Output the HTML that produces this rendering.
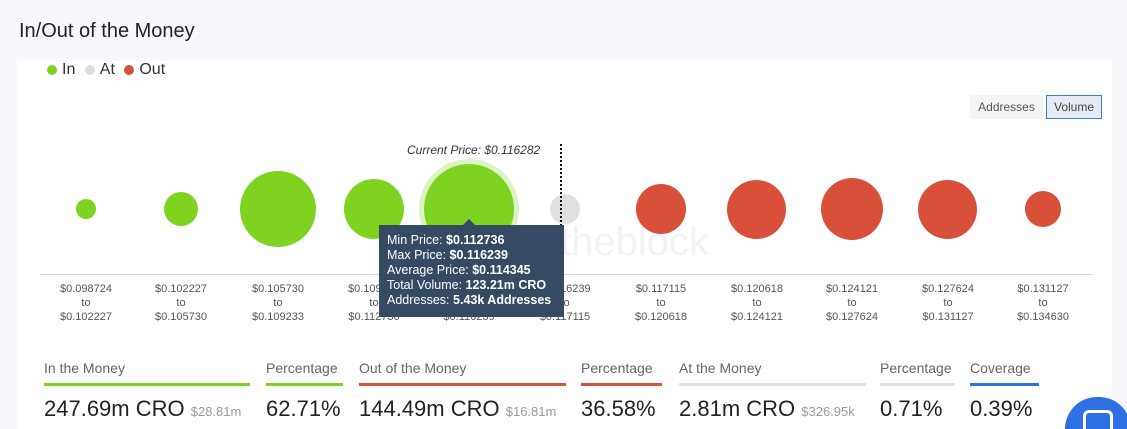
<!DOCTYPE html>
<html><head><meta charset="utf-8"><style>
*{margin:0;padding:0;box-sizing:border-box}
html,body{width:1127px;height:429px;overflow:hidden}
body{background:#f7f8fb;font-family:"Liberation Sans",sans-serif;color:#222}
#w{position:relative;width:1127px;height:429px;overflow:hidden}
.abs{position:absolute}
.card{position:absolute;left:17px;top:61px;width:1095px;height:368px;background:#fff}
.b{position:absolute;border-radius:50%}
.g{background:#7ed321}.r{background:#d9503a}
.lbl{position:absolute;top:282px;width:90px;text-align:center;font-size:11px;line-height:14px;color:#555}
.st{position:absolute;top:360px;font-size:14px;color:#666}
.st .u{height:3px;margin-top:7px}
.st .v{font-size:22px;color:#222;margin-top:10px;white-space:nowrap;line-height:26px}
.st .v small{font-size:13px;color:#999}
</style></head><body><div id="w">
<div class="abs" style="left:19px;top:20px;font-size:20px;color:#222">In/Out of the Money</div>
<div class="card"></div>
<div class="abs" style="left:47px;top:61px;font-size:16px;color:#333;display:flex;align-items:center;gap:5px">
<span style="width:10px;height:10px;border-radius:50%;background:#7ed321;display:inline-block"></span>In&nbsp;
<span style="width:10px;height:10px;border-radius:50%;background:#ddd;display:inline-block"></span>At&nbsp;
<span style="width:10px;height:10px;border-radius:50%;background:#d9503a;display:inline-block"></span>Out</div>
<div class="abs" style="left:970px;top:95px;width:73px;height:24px;background:#f3f4f6;font-size:12px;color:#555;text-align:center;line-height:24px">Addresses</div>
<div class="abs" style="left:1046px;top:95px;width:56px;height:24px;background:#e6ebf5;border:1px solid #3a7be0;font-size:12px;color:#444;text-align:center;line-height:22px">Volume</div>
<div class="abs" style="left:560px;top:220px;font-size:40px;color:#f1f2f5">theblock</div>
<div class="b g" style="left:76px;top:199px;width:20px;height:20px"></div>
<div class="b g" style="left:164px;top:192px;width:34px;height:34px"></div>
<div class="b g" style="left:240px;top:171px;width:76px;height:76px"></div>
<div class="b g" style="left:344px;top:179px;width:60px;height:60px"></div>
<div class="b" style="left:419px;top:159px;width:100px;height:100px;background:#dcf3c4"></div>
<div class="b g" style="left:424px;top:164px;width:90px;height:90px"></div>
<div class="b" style="left:550px;top:194px;width:30px;height:30px;background:#e0e0e0"></div>
<div class="b r" style="left:636px;top:184px;width:50px;height:50px"></div>
<div class="b r" style="left:727px;top:180px;width:59px;height:59px"></div>
<div class="b r" style="left:821px;top:178px;width:62px;height:62px"></div>
<div class="b r" style="left:918px;top:180px;width:59px;height:59px"></div>
<div class="b r" style="left:1025px;top:191px;width:36px;height:36px"></div>
<div class="abs" style="left:560px;top:144px;height:82px;border-left:2px dotted #111"></div>
<div class="abs" style="left:407px;top:143px;font-size:12px;font-style:italic;color:#333">Current Price: $0.116282</div>
<div class="abs" style="left:40px;top:274px;width:1052px;height:1px;background:#c9d6ea"></div>
<div class="lbl" style="left:41px">$0.098724<br>to<br>$0.102227</div>
<div class="lbl" style="left:136px">$0.102227<br>to<br>$0.105730</div>
<div class="lbl" style="left:233px">$0.105730<br>to<br>$0.109233</div>
<div class="lbl" style="left:329px">$0.109233<br>to<br>$0.112736</div>
<div class="lbl" style="left:424px">$0.112736<br>to<br>$0.116239</div>
<div class="lbl" style="left:520px">$0.116239<br>to<br>$0.117115</div>
<div class="lbl" style="left:616px">$0.117115<br>to<br>$0.120618</div>
<div class="lbl" style="left:712px">$0.120618<br>to<br>$0.124121</div>
<div class="lbl" style="left:807px">$0.124121<br>to<br>$0.127624</div>
<div class="lbl" style="left:903px">$0.127624<br>to<br>$0.131127</div>
<div class="lbl" style="left:998px">$0.131127<br>to<br>$0.134630</div>
<div class="abs" style="left:463px;top:219px;width:0;height:0;border-left:6px solid transparent;border-right:6px solid transparent;border-bottom:6px solid #364a63"></div>
<div class="abs" style="left:379px;top:225px;width:185px;height:92px;background:#364a63;color:#fff;font-size:12.5px;line-height:15px;padding:8px 8px;white-space:nowrap">
Min Price: <b>$0.112736</b><br>Max Price: <b>$0.116239</b><br>Average Price: <b>$0.114345</b><br>Total Volume: <b>123.21m CRO</b><br>Addresses: <b>5.43k Addresses</b></div>
<div class="st" style="left:44px;width:206px">In the Money<div class="u" style="background:#7ed321"></div><div class="v">247.69m CRO <small>$28.81m</small></div></div>
<div class="st" style="left:266px;width:77px">Percentage<div class="u" style="background:#7ed321"></div><div class="v">62.71%</div></div>
<div class="st" style="left:359px;width:207px">Out of the Money<div class="u" style="background:#d9503a"></div><div class="v">144.49m CRO <small>$16.81m</small></div></div>
<div class="st" style="left:581px;width:81px">Percentage<div class="u" style="background:#d9503a"></div><div class="v">36.58%</div></div>
<div class="st" style="left:679px;width:187px">At the Money<div class="u" style="background:#e0e0e0"></div><div class="v">2.81m CRO <small>$326.95k</small></div></div>
<div class="st" style="left:880px;width:75px">Percentage<div class="u" style="background:#e0e0e0"></div><div class="v">0.71%</div></div>
<div class="st" style="left:970px;width:69px">Coverage<div class="u" style="background:#2f6fe4"></div><div class="v">0.39%</div></div>
<div class="abs" style="left:1065px;top:397px;width:66px;height:32px;background:#2f6fe4;border-radius:33px 33px 0 0"></div>
<div class="abs" style="left:1083px;top:410px;width:30px;height:19px;border:3px solid #fff;border-bottom:none;border-radius:6px 6px 0 0"></div>
</div></body></html>
